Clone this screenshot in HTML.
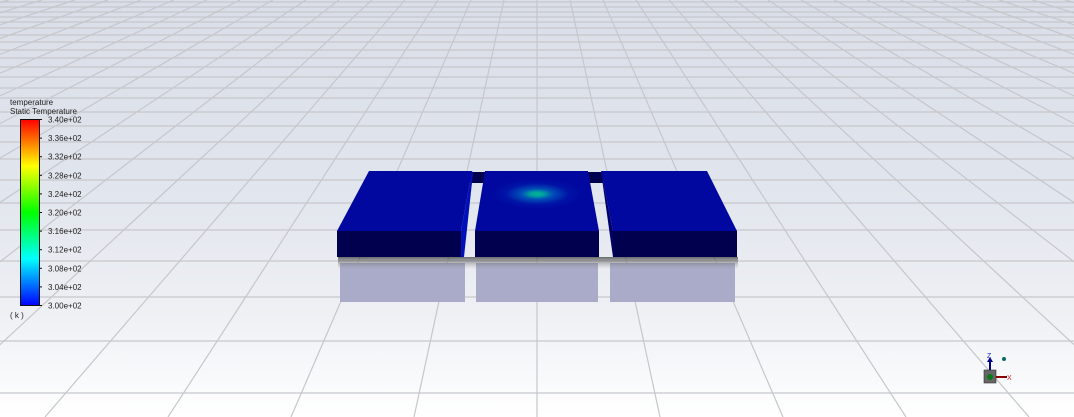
<!DOCTYPE html>
<html><head><meta charset="utf-8"><style>
html,body{margin:0;padding:0;width:1074px;height:417px;overflow:hidden;background:#fff}
svg{display:block}
text{font-family:"Liberation Sans",sans-serif}
</style></head><body>
<svg id="s" width="1074" height="417" viewBox="0 0 1074 417" xmlns="http://www.w3.org/2000/svg">
<defs>
<linearGradient id="bg" x1="0" y1="0" x2="0" y2="1">
<stop offset="0" stop-color="#d9dee8"/>
<stop offset="0.45" stop-color="#e1e5ed"/>
<stop offset="0.75" stop-color="#eef0f4"/>
<stop offset="1" stop-color="#ffffff"/>
</linearGradient>
<linearGradient id="cb" x1="0" y1="0" x2="0" y2="1">
<stop offset="0" stop-color="#ff0000"/>
<stop offset="0.25" stop-color="#ffff00"/>
<stop offset="0.5" stop-color="#00ff00"/>
<stop offset="0.75" stop-color="#00ffff"/>
<stop offset="1" stop-color="#0000ff"/>
</linearGradient>
<radialGradient id="hot" cx="537" cy="194" r="45" gradientUnits="userSpaceOnUse" gradientTransform="translate(537 194) scale(1 0.33) translate(-537 -194)">
<stop offset="0" stop-color="#00b88a"/>
<stop offset="0.15" stop-color="#00a0a0"/>
<stop offset="0.35" stop-color="#0050b8"/>
<stop offset="0.7" stop-color="#0014a6"/>
<stop offset="1" stop-color="#0008a0"/>
</radialGradient>
<linearGradient id="sh" x1="0" y1="0" x2="0" y2="1">
<stop offset="0" stop-color="#333" stop-opacity="0.7"/>
<stop offset="1" stop-color="#888" stop-opacity="0"/>
</linearGradient>
</defs>
<rect width="1074" height="417" fill="url(#bg)"/>
<g id="grid" stroke="#c6c7cb" stroke-width="1.2" fill="none"></g>

<g fill="#a9abc8">
<rect x="340" y="263" width="125" height="39"/>
<rect x="476" y="263" width="122" height="39"/>
<rect x="610" y="263" width="125" height="39"/>
</g>
<rect x="338" y="257" width="400" height="12" fill="url(#sh)"/>

<rect x="470" y="172" width="16" height="11" fill="#00004f"/>
<rect x="587" y="172" width="16" height="11" fill="#00004f"/>

<polygon points="369,171 472,171 461,231 337,231" fill="#0008a0"/>
<polygon points="461,231 472,171 473,173 464,257 461,257" fill="#0010b8"/>
<rect x="337" y="231" width="124" height="26" fill="#00004f"/>
<polygon points="485,171 588,171 599,231 475,231" fill="url(#hot)"/>
<rect x="475" y="231" width="124" height="26" fill="#00004f"/>
<polygon points="601,171 707,171 737,231 613,231" fill="#0008a0"/>
<polygon points="601,171 613,231 613,257 603,186" fill="#00006a"/>
<rect x="613" y="231" width="124" height="26" fill="#00004f"/>

<text x="10" y="105" font-size="8" fill="#222">temperature</text>
<text x="10" y="114" font-size="8" fill="#222">Static Temperature</text>
<rect x="20.5" y="119.5" width="19" height="186" fill="url(#cb)" stroke="#111" stroke-width="1"/>
<g id="lab" font-size="8" fill="#222"></g>
<text x="10" y="318" font-size="8" fill="#222">( k )</text>

<g>
<line x1="990" y1="372" x2="990" y2="360" stroke="#00008a" stroke-width="2"/>
<polygon points="987,362 993,362 990,357" fill="#00008a"/>
<text x="987" y="358" font-size="7" fill="#2222cc">Z</text>
<circle cx="1004" cy="359" r="2" fill="#0a6a6a"/>
<rect x="984" y="370" width="12" height="13" fill="#666" stroke="#333" stroke-width="0.6"/>
<circle cx="990" cy="377" r="3" fill="#0a7a1a"/>
<line x1="996" y1="377" x2="1007" y2="377" stroke="#8a0000" stroke-width="2"/>
<text x="1007" y="380" font-size="7" fill="#cc2222">X</text>
</g>
</svg>
<script>
var g=document.getElementById('grid'),ns="http://www.w3.org/2000/svg";
function L(a,b,c,d){var l=document.createElementNS(ns,'line');l.setAttribute('x1',a);l.setAttribute('y1',b);l.setAttribute('x2',c);l.setAttribute('y2',d);g.appendChild(l);}
[393,341,297,261,230,203,180,159,142,126,112,98,88,77,67,58,50,42,35,28,22,17,12,7,2].forEach(function(y){L(0,y,1074,y);});
var yv=-153,cx=537;
for(var k=-60;k<=60;k++){var xb=cx+123*k;var xt=cx+123*k*(0-yv)/(417-yv);L(xt,0,xb,417);}
var lb=document.getElementById('lab');
var v=["3.40e+02","3.36e+02","3.32e+02","3.28e+02","3.24e+02","3.20e+02","3.16e+02","3.12e+02","3.08e+02","3.04e+02","3.00e+02"];
for(var i=0;i<11;i++){var y=119.5+i*18.6;var t=document.createElementNS(ns,'text');t.setAttribute('x',48);t.setAttribute('y',y+3);t.textContent=v[i];lb.appendChild(t);
var l=document.createElementNS(ns,'line');l.setAttribute('x1',39);l.setAttribute('x2',42);l.setAttribute('y1',y);l.setAttribute('y2',y);l.setAttribute('stroke','#111');lb.appendChild(l);}
</script>
</body></html>
